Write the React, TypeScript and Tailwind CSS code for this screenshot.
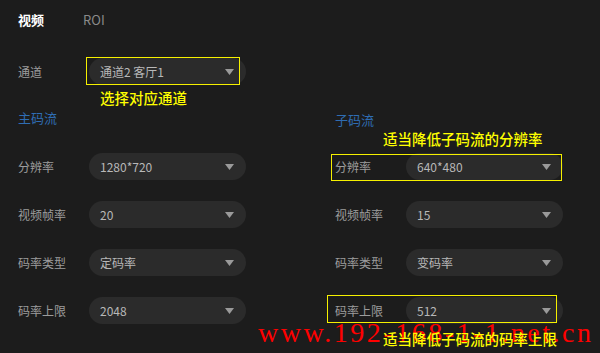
import React from 'react';

const font = { fontFamily: '"Noto Sans CJK SC", "Noto Sans", sans-serif' };

function Caret() {
  return (
    <svg width="9" height="6" viewBox="0 0 9 6" className="shrink-0">
      <path d="M0 0 L9 0 L4.5 6 Z" fill="#9a9a9a" />
    </svg>
  );
}

function Field({ label, value }: { label: string; value: string }) {
  return (
    <div className="flex items-center h-[27px]">
      <div className="w-[71px] text-[12px] text-[#9c9c9c]">{label}</div>
      <div className="w-[157px] h-[27px] rounded-full bg-[#2b2b2b] flex items-center justify-between pl-[11px] pr-[12px]">
        <span className="text-[12px] text-[#b8b8b8]">{value}</span>
        <Caret />
      </div>
    </div>
  );
}

const mainStream = [
  { label: '分辨率', value: '1280*720' },
  { label: '视频帧率', value: '20' },
  { label: '码率类型', value: '定码率' },
  { label: '码率上限', value: '2048' },
];

const subStream = [
  { label: '分辨率', value: '640*480' },
  { label: '视频帧率', value: '15' },
  { label: '码率类型', value: '变码率' },
  { label: '码率上限', value: '512' },
];

export default function App() {
  return (
    <div className="relative w-[600px] h-[353px] overflow-hidden bg-[#1c1c1c] pl-[18px]" style={font}>
      <div className="h-[40px] flex items-center gap-[39px] text-[13px]">
        <span className="text-white font-semibold">视频</span>
        <span className="text-[#8a8a8a]">ROI</span>
      </div>

      <div className="mt-[18px]">
        <Field label="通道" value="通道2 客厅1" />
      </div>

      <div className="flex mt-[25px]">
        <div className="w-[317px]">
          <div className="h-[16px] leading-[16px] text-[13px] text-[#2f6db3]">主码流</div>
          <div className="mt-[27px] flex flex-col gap-[21px]">
            {mainStream.map(f => <Field key={f.label} label={f.label} value={f.value} />)}
          </div>
        </div>
        <div className="w-[265px]">
          <div className="h-[16px] mt-[2px] leading-[16px] text-[13px] text-[#2f6db3]">子码流</div>
          <div className="mt-[25px] flex flex-col gap-[21px]">
            {subStream.map(f => <Field key={f.label} label={f.label} value={f.value} />)}
          </div>
        </div>
      </div>

      {/* annotations */}
      <div className="absolute left-[86px] top-[57px] w-[154px] h-[28px] border border-[#f5f000]" />
      <div className="absolute left-[100px] top-[89px] text-[14.5px] leading-[18px] font-medium text-[#ffff00]">选择对应通道</div>
      <div className="absolute left-[383px] top-[130px] text-[14.5px] leading-[18px] font-medium text-[#ffff00]">适当降低子码流的分辨率</div>
      <div className="absolute left-[331px] top-[154px] w-[231px] h-[27px] border border-[#f5f000]" />
      <div className="absolute left-[327px] top-[295px] w-[230px] h-[28px] border border-[#f5f000]" />
      <div
        className="absolute left-[258px] top-[316px] text-[28px] leading-[34px] tracking-[2.5px] text-[#ff0000] whitespace-nowrap"
        style={{ fontFamily: '"Liberation Serif", serif' }}
      >
        www.192-168-1-1.net.cn
      </div>
      <div className="absolute left-[383px] top-[330px] text-[14.5px] leading-[18px] font-medium text-[#ffff00]">适当降低子码流的码率上限</div>
    </div>
  );
}
